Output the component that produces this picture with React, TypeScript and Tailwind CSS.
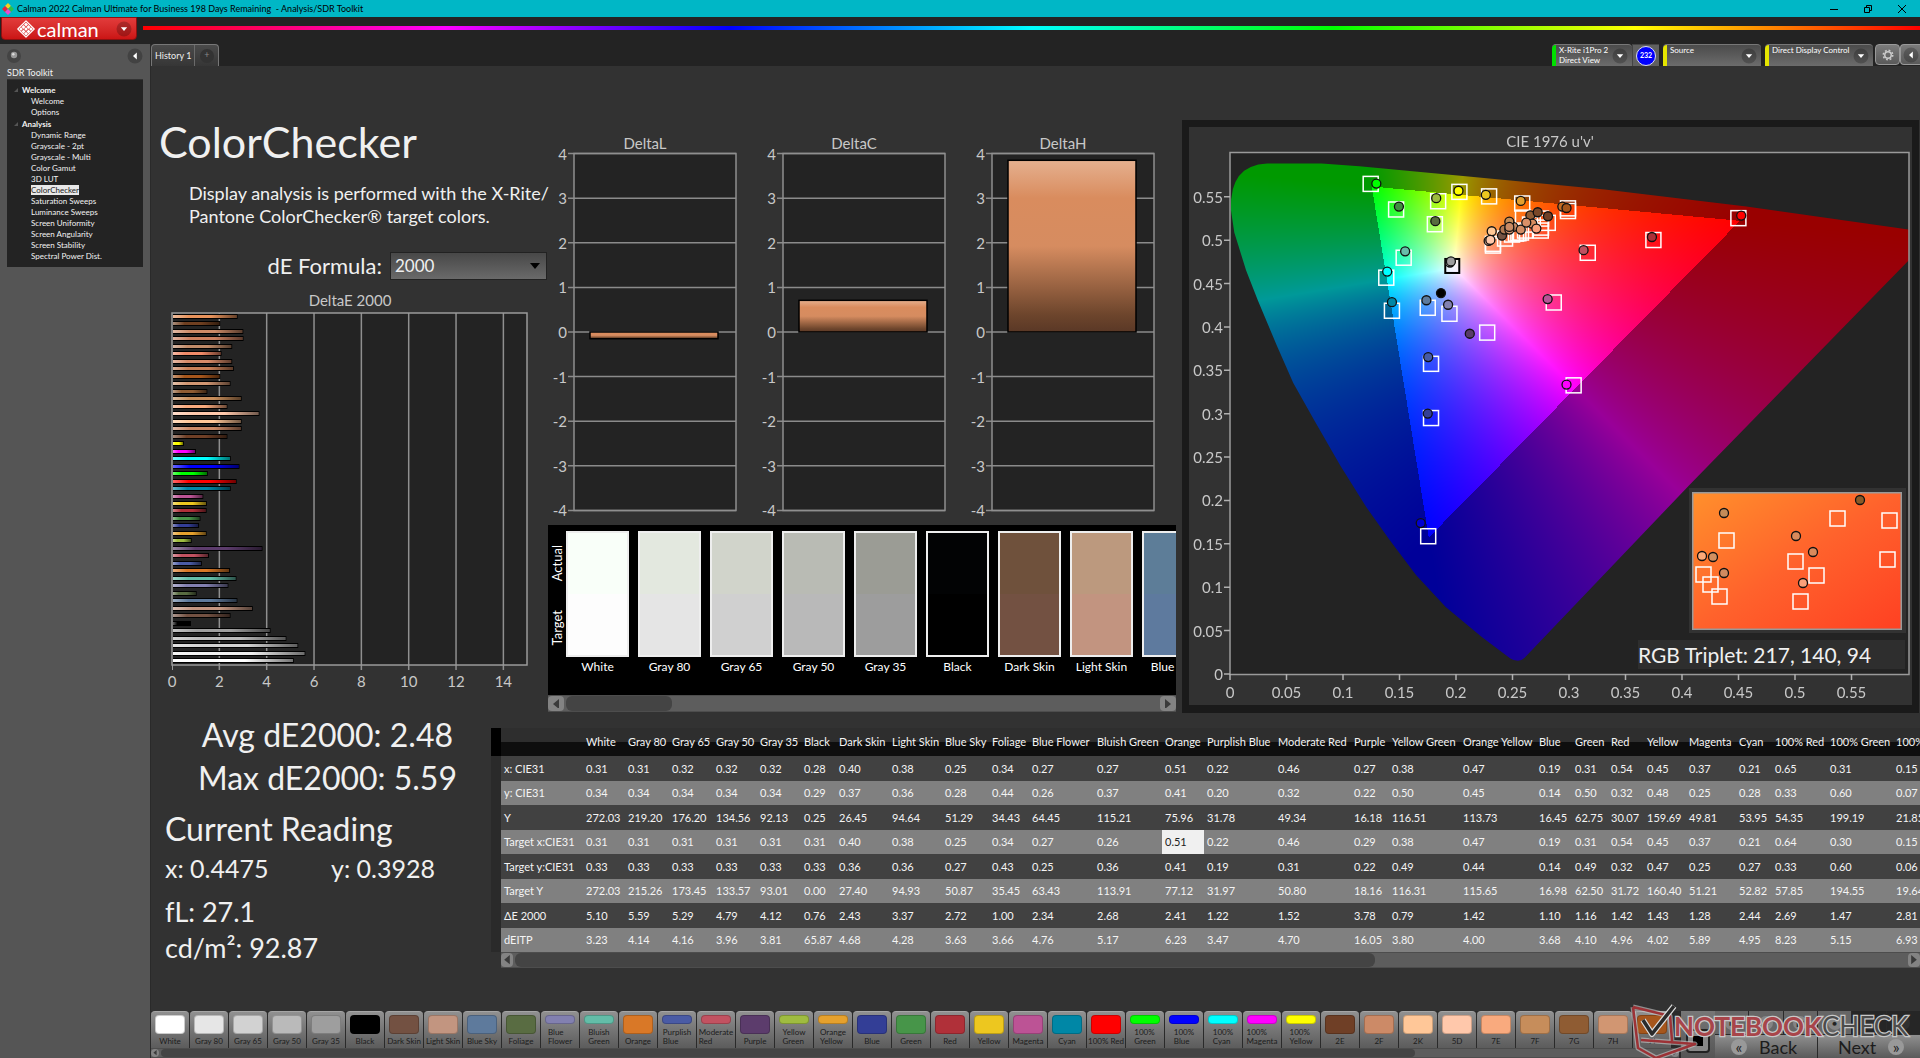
import React, { useEffect, useRef } from "react";

/* ---------- data ---------- */

type Patch = { name: string; color: string; label?: string[] };

const patches: Patch[] = [
  { name: "White", color: "#ffffff" },
  { name: "Gray 80", color: "#e6e6e6" },
  { name: "Gray 65", color: "#d2d2d2" },
  { name: "Gray 50", color: "#bababa" },
  { name: "Gray 35", color: "#9e9e9e" },
  { name: "Black", color: "#000000" },
  { name: "Dark Skin", color: "#735142" },
  { name: "Light Skin", color: "#c29580" },
  { name: "Blue Sky", color: "#5e7a9c" },
  { name: "Foliage", color: "#596c42" },
  { name: "Blue Flower", color: "#8280b0", label: ["Blue", "Flower"] },
  { name: "Bluish Green", color: "#63bda8", label: ["Bluish", "Green"] },
  { name: "Orange", color: "#d97827" },
  { name: "Purplish Blue", color: "#4a5ba5", label: ["Purplish", "Blue"] },
  { name: "Moderate Red", color: "#c25261", label: ["Moderate", "Red"] },
  { name: "Purple", color: "#5c3c6c" },
  { name: "Yellow Green", color: "#9fbc40", label: ["Yellow", "Green"] },
  { name: "Orange Yellow", color: "#e6a12d", label: ["Orange", "Yellow"] },
  { name: "Blue", color: "#333e96" },
  { name: "Green", color: "#479549" },
  { name: "Red", color: "#b03039" },
  { name: "Yellow", color: "#edc71f" },
  { name: "Magenta", color: "#bc5395" },
  { name: "Cyan", color: "#0087a6" },
  { name: "100% Red", color: "#ff0000" },
  { name: "100% Green", color: "#00ff00", label: ["100%", "Green"] },
  { name: "100% Blue", color: "#0000ff", label: ["100%", "Blue"] },
  { name: "100% Cyan", color: "#00ffff", label: ["100%", "Cyan"] },
  { name: "100% Magenta", color: "#ff00ff", label: ["100%", "Magenta"] },
  { name: "100% Yellow", color: "#ffff00", label: ["100%", "Yellow"] },
  { name: "2E", color: "#6f3f26" },
  { name: "2F", color: "#cc8a67" },
  { name: "2K", color: "#ffc798" },
  { name: "5D", color: "#ffc8ab" },
  { name: "7E", color: "#f9aa7e" },
  { name: "7F", color: "#c68d5b" },
  { name: "7G", color: "#8f5c33" },
  { name: "7H", color: "#d19672" },
  { name: "7I", color: "#a6561c" },
];

// DeltaE bars, top to bottom
const deltaE: [number, string][] = [
  [2.73, "#e8935c"], [2.0, "#6f3f20"], [2.97, "#cc8a67"], [2.98, "#cb8060"], [2.5, "#c08a68"],
  [2.05, "#f08a68"], [2.5, "#d68a68"], [2.57, "#c98058"], [2.0, "#a6561c"], [2.43, "#d19672"],
  [1.45, "#8f5c33"], [2.9, "#c68d5b"], [2.3, "#f9aa7e"], [3.65, "#ffc8ab"], [2.9, "#ffc798"],
  [2.9, "#cc8a67"], [2.3, "#6f3f26"], [0.46, "#ffff00"], [0.97, "#ff00ff"], [2.44, "#00ffff"],
  [2.81, "#0000ff"], [1.47, "#00ff00"], [2.69, "#ff0000"], [2.44, "#0087a6"], [1.28, "#bc5395"],
  [1.43, "#edc71f"], [1.42, "#b03039"], [1.16, "#479549"], [1.1, "#333e96"], [1.42, "#e6a12d"],
  [0.79, "#9fbc40"], [3.78, "#5c3c6c"], [1.52, "#c25261"], [1.22, "#4a5ba5"], [2.41, "#d97827"],
  [2.68, "#63bda8"], [2.34, "#8280b0"], [1.0, "#596c42"], [2.72, "#5e7a9c"], [3.37, "#c29580"],
  [2.43, "#735142"], [0.76, "#000000"], [4.12, "#9e9e9e"], [4.79, "#bababa"], [5.29, "#d2d2d2"],
  [5.59, "#f0f0f0"], [5.1, "#ffffff"],
];

const swatches = [
  { name: "White", actual: "#f9fff9", target: "#fdfdfd" },
  { name: "Gray 80", actual: "#e3e8df", target: "#e5e5e5" },
  { name: "Gray 65", actual: "#d1d4cb", target: "#d0d0d0" },
  { name: "Gray 50", actual: "#b9bbb4", target: "#b9b9b9" },
  { name: "Gray 35", actual: "#9b9c95", target: "#9d9d9d" },
  { name: "Black", actual: "#020304", target: "#000000" },
  { name: "Dark Skin", actual: "#6f513c", target: "#735142" },
  { name: "Light Skin", actual: "#bc997e", target: "#c29480" },
  { name: "Blue Sky", actual: "#5d7d98", target: "#5e7a9e" },
];

const columns: [string, number][] = [
  ["White", 42], ["Gray 80", 44], ["Gray 65", 44], ["Gray 50", 44], ["Gray 35", 44], ["Black", 35],
  ["Dark Skin", 53], ["Light Skin", 53], ["Blue Sky", 47], ["Foliage", 40], ["Blue Flower", 65],
  ["Bluish Green", 68], ["Orange", 42], ["Purplish Blue", 71], ["Moderate Red", 76], ["Purple", 38],
  ["Yellow Green", 71], ["Orange Yellow", 76], ["Blue", 36], ["Green", 36], ["Red", 36],
  ["Yellow", 42], ["Magenta", 50], ["Cyan", 36], ["100% Red", 55], ["100% Green", 66], ["100% Blue", 62],
];

const rows: [string, string][] = [
  ["x: CIE31", "0.31 0.31 0.32 0.32 0.32 0.28 0.40 0.38 0.25 0.34 0.27 0.27 0.51 0.22 0.46 0.27 0.38 0.47 0.19 0.31 0.54 0.45 0.37 0.21 0.65 0.31 0.15"],
  ["y: CIE31", "0.34 0.34 0.34 0.34 0.34 0.29 0.37 0.36 0.28 0.44 0.26 0.37 0.41 0.20 0.32 0.22 0.50 0.45 0.14 0.50 0.32 0.48 0.25 0.28 0.33 0.60 0.07"],
  ["Y", "272.03 219.20 176.20 134.56 92.13 0.25 26.45 94.64 51.29 34.43 64.45 115.21 75.96 31.78 49.34 16.18 116.51 113.73 16.45 62.75 30.07 159.69 49.81 53.95 54.35 199.19 21.85"],
  ["Target x:CIE31", "0.31 0.31 0.31 0.31 0.31 0.31 0.40 0.38 0.25 0.34 0.27 0.26 0.51 0.22 0.46 0.29 0.38 0.47 0.19 0.31 0.54 0.45 0.37 0.21 0.64 0.30 0.15"],
  ["Target y:CIE31", "0.33 0.33 0.33 0.33 0.33 0.33 0.36 0.36 0.27 0.43 0.25 0.36 0.41 0.19 0.31 0.22 0.49 0.44 0.14 0.49 0.32 0.47 0.25 0.27 0.33 0.60 0.06"],
  ["Target Y", "272.03 215.26 173.45 133.57 93.01 0.00 27.40 94.93 50.87 35.45 63.43 113.91 77.12 31.97 50.80 18.16 116.31 115.65 16.98 62.50 31.72 160.40 51.21 52.82 57.85 194.55 19.64"],
  ["ΔE 2000", "5.10 5.59 5.29 4.79 4.12 0.76 2.43 3.37 2.72 1.00 2.34 2.68 2.41 1.22 1.52 3.78 0.79 1.42 1.10 1.16 1.42 1.43 1.28 2.44 2.69 1.47 2.81"],
  ["dEITP", "3.23 4.14 4.16 3.96 3.81 65.87 4.68 4.28 3.63 3.66 4.76 5.17 6.23 3.47 4.70 16.05 3.80 4.00 3.68 4.10 4.96 4.02 5.89 4.95 8.23 5.15 6.93"],
];

const tree = [
  { title: "Welcome", items: ["Welcome", "Options"] },
  {
    title: "Analysis",
    items: [
      "Dynamic Range", "Grayscale - 2pt", "Grayscale - Multi", "Color Gamut", "3D LUT", "ColorChecker",
      "Saturation Sweeps", "Luminance Sweeps", "Screen Uniformity", "Screen Angularity",
      "Screen Stability", "Spectral Power Dist.",
    ],
  },
];

// CIE 1976 diagram, all in u'v'
const locus: [number, number][] = [
  [0.0008, 0.535], [0.001, 0.547], [0.0025, 0.5588], [0.0048, 0.567], [0.0079, 0.574], [0.0125, 0.58],
  [0.0184, 0.5845], [0.025, 0.5872], [0.033, 0.5883], [0.081, 0.5883], [0.1145, 0.5852], [0.2063, 0.574],
  [0.3317, 0.5583], [0.457, 0.5388], [0.624, 0.508], [0.4068, 0.2182], [0.2607, 0.0187], [0.258, 0.016],
  [0.2548, 0.0152], [0.251, 0.016], [0.2481, 0.0178], [0.2231, 0.0425], [0.1909, 0.0772],
  [0.1646, 0.1141], [0.1408, 0.1553], [0.1207, 0.1922], [0.0977, 0.2399], [0.0748, 0.292],
  [0.056, 0.3354], [0.0414, 0.3787], [0.0246, 0.4308], [0.0142, 0.4655], [0.0038, 0.5089],
];

const targets: [number, number][] = [
  [0.1245, 0.5649], [0.147, 0.5354], [0.1842, 0.5449], [0.203, 0.5557], [0.2293, 0.5505], [0.2586, 0.5423],
  [0.2991, 0.5367], [0.2991, 0.5336], [0.4499, 0.5254], [0.3747, 0.5002], [0.3166, 0.4855],
  [0.1813, 0.5184], [0.1537, 0.4798], [0.1383, 0.4568], [0.1433, 0.4187], [0.175, 0.4221],
  [0.1942, 0.4152], [0.2276, 0.3935], [0.2865, 0.4282], [0.1779, 0.3575], [0.3041, 0.3327],
  [0.1779, 0.295], [0.1754, 0.1588], [0.2327, 0.4938], [0.2327, 0.4958], [0.2434, 0.5019],
  [0.2496, 0.5065], [0.2531, 0.5076], [0.2575, 0.5088], [0.2611, 0.5111], [0.2552, 0.508],
  [0.275, 0.5111], [0.2752, 0.5145], [0.2812, 0.52], [0.2655, 0.518], [0.2752, 0.5249], [0.2593, 0.526],
];

const readings: [number, number, string][] = [
  [0.1295, 0.5653, "#00ff00"], [0.1495, 0.5388, "#3f8f40"], [0.1825, 0.5484, "#9dbb40"],
  [0.2022, 0.557, "#ffff00"], [0.2264, 0.5523, "#ecc820"], [0.2573, 0.5453, "#e4a02f"],
  [0.2941, 0.5388, "#c46c24"], [0.2978, 0.5371, "#a6561c"], [0.4524, 0.5284, "#ff0000"],
  [0.3734, 0.5037, "#ae3038"], [0.3129, 0.4885, "#c05060"], [0.1817, 0.5219, "#586c3f"],
  [0.155, 0.4872, "#67bdaa"], [0.1391, 0.4638, "#00ffff"], [0.1433, 0.4286, "#0087a5"],
  [0.1947, 0.4743, "#c8c8c8"], [0.1955, 0.4755, "#9e9e9e"], [0.1867, 0.439, "#000000"],
  [0.1738, 0.4308, "#5d7b9e"], [0.193, 0.4256, "#8281b0"], [0.2122, 0.3922, "#593b69"],
  [0.2811, 0.4321, "#b95397"], [0.1754, 0.3653, "#465ba5"], [0.2978, 0.3336, "#ff00ff"],
  [0.175, 0.3002, "#343f95"], [0.1688, 0.174, "#0000d0"], [0.2316, 0.5103, "#ffc896"],
  [0.2289, 0.4992, "#c79680"], [0.2304, 0.5003, "#ffc8aa"], [0.2407, 0.5053, "#735242"],
  [0.2428, 0.5122, "#b07850"], [0.2507, 0.5153, "#c98a64"], [0.2472, 0.5214, "#c48c58"],
  [0.2472, 0.5122, "#d2946f"], [0.2472, 0.5153, "#c98a64"], [0.2573, 0.5122, "#d28c64"],
  [0.2658, 0.5287, "#905c34"], [0.2675, 0.5191, "#d98c5e"], [0.2622, 0.5203, "#d99068"],
  [0.2711, 0.5134, "#faa07a"], [0.2723, 0.5322, "#7a4828"], [0.2814, 0.5276, "#703f26"],
];

const insetTargets: [number, number][] = [
  [146, 26], [198, 28], [35, 48], [104, 69], [196, 67], [125, 83], [12, 82], [19, 92], [28, 104], [109, 109],
];
const insetReadings: [number, number, string][] = [
  [168, 8, "#8a5a28"], [32, 21, "#c48c58"], [104, 44, "#d98a5c"], [121, 60, "#d98a5c"], [10, 64, "#ffaa78"],
  [21, 65, "#d29060"], [32, 81, "#d08a60"], [111, 91, "#faa07a"],
];

/* ---------- small parts ---------- */

function RoundArrow({ dir = "down" }: { dir?: "down" | "left" }) {
  return (
    <svg className="h-4 w-4 shrink-0" viewBox="0 0 16 16" aria-hidden="true">
      <circle cx="8" cy="8" r="7.5" fill="#000" opacity="0.22" />
      <path d={dir === "down" ? "M4.8 6.2h6.4L8 10z" : "M9.8 4.4v7.2L6 8z"} fill="#fff" />
    </svg>
  );
}

function Scrollbar({ thumb, height, arrow }: { thumb: string; height: string; arrow: string }) {
  return (
    <div className={`flex items-stretch border-y border-[#4d4d4d] bg-[#5d5d5d] ${height}`}>
      <button aria-label="Scroll left" className={`flex shrink-0 items-center justify-center rounded-sm bg-[#838383] ${arrow}`}>
        <svg className="h-2/3 w-1/2" viewBox="0 0 6 10"><path d="M6 0v10L0 5z" fill="#3a3a3a" /></svg>
      </button>
      <div className="flex-1 px-0.5">
        <div className={`h-full rounded-md bg-[#444] ${thumb}`} />
      </div>
      <button aria-label="Scroll right" className={`flex shrink-0 items-center justify-center rounded-sm bg-[#838383] ${arrow}`}>
        <svg className="h-2/3 w-1/2" viewBox="0 0 6 10"><path d="M0 0v10l6-5z" fill="#3a3a3a" /></svg>
      </button>
    </div>
  );
}

/* ---------- header ---------- */

function TitleBar() {
  return (
    <div className="flex h-[17px] items-center bg-[#00b7c6] px-0.5 text-[9px] leading-4 text-black">
      <svg className="mr-[3px] h-3 w-3" viewBox="0 0 12 12" aria-hidden="true">
        <path d="M6 0l3 3-3 3-3-3z" fill="#f4d21f" />
        <path d="M3 3l3 3-3 3-3-3z" fill="#e5263a" />
        <path d="M9 3l3 3-3 3-3-3z" fill="#2fc04a" />
        <path d="M6 6l3 3-3 3-3-3z" fill="#e64bd0" />
      </svg>
      <span className="whitespace-pre">Calman 2022 Calman Ultimate for Business 198 Days Remaining  - Analysis/SDR Toolkit</span>
      <div className="ml-auto flex items-center gap-[26px] pr-3">
        <button aria-label="Minimize"><svg className="h-2 w-2" viewBox="0 0 8 8"><path d="M0 4.5h8" stroke="#000" /></svg></button>
        <button aria-label="Restore">
          <svg className="h-2 w-2" viewBox="0 0 8 8" fill="none" stroke="#000"><path d="M.5 2.5h5v5h-5zM2.5 2.5v-2h5v5h-2" /></svg>
        </button>
        <button aria-label="Close"><svg className="h-2 w-2" viewBox="0 0 8 8"><path d="M0 0l8 8M8 0L0 8" stroke="#000" /></svg></button>
      </div>
    </div>
  );
}

function BrandBar() {
  return (
    <div className="flex h-[27px] items-start gap-1.5 bg-[#232323]">
      <button className="ml-px flex h-[23px] w-[136px] items-center rounded-b-sm border border-[#8e1010] bg-gradient-to-b from-[#e23b3b] to-[#cb1414] pl-[15px] text-white">
        <svg className="h-[18px] w-[18px]" viewBox="0 0 18 18" aria-hidden="true">
          <path d="M9 0.8l8.2 8.2L9 17.2 0.8 9z" fill="none" stroke="#fff" strokeWidth="1.2" strokeLinejoin="round" />
          <g fill="#fff">
            <path d="M9 2.6l2 2-2 2-2-2zM6.5 5l2 2-2 2-2-2zM11.5 5l2 2-2 2-2-2zM4 7.2l1.9 1.9L4 11 2.2 9.1zM9 7.2l1.9 1.9L9 11 7.1 9.1zM14 7.2l1.9 1.9L14 11l-1.9-1.9zM6.5 9.5l2 2-2 2-2-2zM11.5 9.5l2 2-2 2-2-2zM9 11.8l2 2-2 2-2-2z" />
          </g>
        </svg>
        <span className="ml-0.5 text-xl font-normal leading-5">calman</span>
        <span className="ml-auto mr-1"><RoundArrow /></span>
      </button>
      <div className="mt-[9px] h-1 flex-1 bg-[linear-gradient(90deg,#f00_0%,#f0f_17%,#00f_33%,#0ff_50%,#0f0_67%,#ff0_84%,#f00_100%)]" />
    </div>
  );
}

function DeviceButton({ color, lines, className }: { color: string; lines: string[]; className: string }) {
  return (
    <button className={`flex h-[22px] rounded-t-sm border-t border-[#777] bg-gradient-to-b from-[#4b4b4b] to-[#6c6c6c] text-left text-[8px] leading-[10px] text-white ${className}`}>
      <span className={`h-full w-1 shrink-0 rounded-tl-sm ${color}`} />
      <span className="ml-[3px] flex-1 whitespace-nowrap">
        {lines.map((line) => (
          <span key={line} className="block">{line}</span>
        ))}
      </span>
      <span className="mr-1 mt-[3px]"><RoundArrow /></span>
    </button>
  );
}

function TabRow() {
  return (
    <div className="flex h-[22px] items-end bg-[#232323]">
      <div className="flex h-[22px] rounded-t-sm border border-b-0 border-[#777] bg-gradient-to-b from-[#4a4a4a] to-[#363636]">
        <button className="border-r border-[#6a6a6a] px-[3px] text-[9px] text-[#eee]">History 1</button>
        <button aria-label="Add tab" className="flex w-[23px] items-center justify-center">
          <span className="h-3.5 w-3.5 rounded-full bg-[#333] text-[9px] leading-3 text-[#888]">+</span>
        </button>
      </div>
      <div className="ml-auto flex items-start gap-1">
        <div className="flex">
          <DeviceButton className="w-20" color="bg-[#00e000]" lines={["X-Rite i1Pro 2", "Direct View"]} />
          <div className="flex h-[22px] w-[27px] items-center justify-center border-l border-t border-[#444] bg-[#606060]">
            <span className="flex h-5 w-5 items-center justify-center rounded-full border border-[#dde] bg-[#0000ff] text-[7px] font-bold text-white">232</span>
          </div>
        </div>
        <DeviceButton className="w-[98px]" color="bg-[#e6e600]" lines={["Source"]} />
        <DeviceButton className="w-[108px]" color="bg-[#e6e600]" lines={["Direct Display Control"]} />
        <div className="-ml-0.5 flex">
          <button aria-label="Settings" className="flex h-[21px] w-[25px] items-center justify-center rounded-sm border border-[#999] bg-gradient-to-b from-[#7b7b7b] to-[#5a5a5a]">
            <svg className="h-3 w-3" viewBox="0 0 24 24" fill="none" stroke="#ccc">
              <circle cx="12" cy="12" r="6.5" strokeWidth="3" />
              <circle cx="12" cy="12" r="9.5" strokeWidth="3" strokeDasharray="3.7 3.76" />
            </svg>
          </button>
          <button aria-label="Collapse" className="flex h-[21px] w-5 items-center justify-center rounded-l-sm border border-r-0 border-[#999] bg-gradient-to-b from-[#7b7b7b] to-[#5a5a5a]">
            <RoundArrow dir="left" />
          </button>
        </div>
      </div>
    </div>
  );
}

/* ---------- sidebar ---------- */

function Sidebar() {
  return (
    <aside className="w-[151px] shrink-0 border-r border-[#2a2a2a] bg-[#555] px-[7px] text-[#f2f2f2]">
      <div className="flex h-[27px] items-center justify-between pb-1">
        <svg className="h-3.5 w-3.5" viewBox="0 0 14 14" aria-hidden="true">
          <circle cx="7" cy="7" r="7" fill="#444" />
          <circle cx="7" cy="6" r="3.2" fill="#999" />
          <circle cx="6.3" cy="5.2" r="1.2" fill="#ddd" />
        </svg>
        <button aria-label="Hide panel"><RoundArrow dir="left" /></button>
      </div>
      <h2 className="h-2 text-[9px] leading-[3px]">SDR Toolkit</h2>
      <nav className="h-[188px] border-t border-[#333] bg-[#232323] pt-1 text-[8px] leading-[11px]">
        {tree.map((group) => (
          <div key={group.title}>
            <div className="flex h-3 items-center font-bold">
              <svg className="ml-[7px] mr-1 h-1 w-1" viewBox="0 0 4 4"><path d="M4 0v4H0z" fill="#555" /></svg>
              {group.title}
            </div>
            <ul className="pl-6">
              {group.items.map((item) => (
                <li key={item} className="h-[11px]">
                  <a href="#" className={item === "ColorChecker" ? "bg-[#e8e8e8] text-[#222]" : ""}>{item}</a>
                </li>
              ))}
            </ul>
          </div>
        ))}
      </nav>
    </aside>
  );
}

/* ---------- charts ---------- */

function DeltaEChart() {
  const x = (v: number) => 21 + v * 23.67;
  return (
    <svg className="block h-[404px] w-[398px]" viewBox="0 0 398 404" role="img" aria-label="DeltaE 2000">
      <defs>
        <linearGradient id="barShade">
          <stop offset="0" stopColor="#fff" stopOpacity="0.4" />
          <stop offset="0.25" stopColor="#fff" stopOpacity="0" />
          <stop offset="0.6" stopColor="#000" stopOpacity="0" />
          <stop offset="1" stopColor="#000" stopOpacity="0.55" />
        </linearGradient>
      </defs>
      <text x="199" y="22" textAnchor="middle" fontSize="15" fill="#c8c8c8">DeltaE 2000</text>
      <rect x="21" y="29" width="355" height="352" fill="#232323" />
      {[2, 4, 6, 8, 10, 12, 14].map((v) => (
        <path key={v} d={`M${x(v)} 29v357`} stroke="#8f8f8f" strokeWidth="1.5" />
      ))}
      <rect x="21" y="29" width="355" height="352" fill="none" stroke="#9a9a9a" strokeWidth="1.5" />
      {deltaE.map(([v, color], i) => {
        const y = Math.round(30 + i * 7.48);
        return (
          <g key={i}>
            <rect x="22" y={y} width={v * 23.67} height="5" fill="#000" />
            <rect x="22" y={y + 1} width={v * 23.67 - 1} height="3" fill={color} />
            <rect x="22" y={y + 1} width={v * 23.67 - 1} height="3" fill="url(#barShade)" />
          </g>
        );
      })}
      {[0, 2, 4, 6, 8, 10, 12, 14].map((v) => (
        <text key={v} x={x(v)} y="403" textAnchor="middle" fontSize="15" fill="#c8c8c8">{v}</text>
      ))}
      <path d="M21.5 381v5" stroke="#9a9a9a" />
    </svg>
  );
}

function DeltaChart({ title, value }: { title: string; value: number }) {
  const y = (v: number) => 199 - v * 44.6;
  const ticks = [4, 3, 2, 1, 0, -1, -2, -3, -4];
  const top = value > 0 ? y(value) : y(0);
  const height = Math.abs(value) * 44.6;
  return (
    <svg className="block h-[390px] w-[209px]" viewBox="0 0 209 390" role="img" aria-label={title}>
      <defs>
        <linearGradient id="skinBar" x2="0" y2="1">
          <stop offset="0" stopColor="#e5b08f" />
          <stop offset="0.22" stopColor="#d98c5e" />
          <stop offset="0.5" stopColor="#d68c60" />
          <stop offset="0.9" stopColor="#6d452c" />
          <stop offset="1" stopColor="#5a3826" />
        </linearGradient>
      </defs>
      <text x="97" y="16" textAnchor="middle" fontSize="15" fill="#c8c8c8">{title}</text>
      <rect x="26" y="20.5" width="162" height="357" fill="#232323" />
      {ticks.map((t) => (
        <g key={t}>
          <path d={`M20 ${y(t)}H188`} stroke="#8b8b8b" strokeWidth="1.5" />
          <text x="19" y={y(t) + 6} textAnchor="end" fontSize="15" fill="#c8c8c8">{t}</text>
        </g>
      ))}
      <rect x="26" y="20.5" width="162" height="357" fill="none" stroke="#8f8f8f" strokeWidth="1.5" />
      <rect x="42" y={top} width="128" height={height} fill="url(#skinBar)" stroke="#000" strokeWidth="1.5" />
    </svg>
  );
}

const CIE_W = 723;
const CIE_H = 578;
const cx = (u: number) => 41 + u * 1130;
const cy = (v: number) => 547 - v * 867.6;

function GamutCanvas() {
  const ref = useRef<HTMLCanvasElement>(null);

  useEffect(() => {
    const ctx = ref.current?.getContext("2d");
    if (!ctx) return;
    const image = ctx.createImageData(CIE_W, CIE_H);
    for (let py = 0; py < CIE_H; py++) {
      for (let px = 0; px < CIE_W; px++) {
        const u = (px - 41) / 1130;
        const v = Math.max((547 - py) / 867.6, 0.001);
        const d = 6 * u - 16 * v + 12;
        const x = (9 * u) / d;
        const y = (4 * v) / d;
        const X = x / y;
        const Z = (1 - x - y) / y;
        const lin = [
          3.2406 * X - 1.5372 - 0.4986 * Z,
          -0.9689 * X + 1.8758 + 0.0415 * Z,
          0.0557 * X - 0.204 + 1.057 * Z,
        ];
        const max = Math.max(...lin);
        // colours outside the sRGB triangle are dimmed
        const gain = Math.min(...lin) < 0 ? 0.6 : 1;
        const o = (py * CIE_W + px) * 4;
        for (let c = 0; c < 3; c++) {
          image.data[o + c] = 255 * gain * Math.max(lin[c] / max, 0);
        }
        image.data[o + 3] = 255;
      }
    }
    ctx.putImageData(image, 0, 0);
    ctx.globalCompositeOperation = "destination-in";
    ctx.beginPath();
    locus.forEach(([u, v]) => ctx.lineTo(cx(u), cy(v)));
    ctx.closePath();
    ctx.fill();
    ctx.globalCompositeOperation = "source-over";
    ctx.clearRect(720, 0, 3, CIE_H);
  }, []);

  return <canvas ref={ref} width={CIE_W} height={CIE_H} className="absolute inset-0 h-full w-full" />;
}

function CieChart() {
  const uTicks = [0, 0.05, 0.1, 0.15, 0.2, 0.25, 0.3, 0.35, 0.4, 0.45, 0.5, 0.55];
  return (
    <section className="min-w-0 flex-1 border-[7px] border-b-8 border-[#1a1a1a] bg-[#323232]">
      <div className="relative">
        <svg className="block w-full" viewBox="0 0 723 578" aria-hidden="true">
          <rect x="41" y="25" width="679" height="522" fill="#232323" />
        </svg>
        <GamutCanvas />
        <svg className="absolute inset-0 w-full" viewBox="0 0 723 578" role="img" aria-label="CIE 1976 u'v' diagram">
          <defs>
            <linearGradient id="insetFill" x2="1" y2="1">
              <stop offset="0" stopColor="#ff902c" />
              <stop offset="0.5" stopColor="#ff622c" />
              <stop offset="1" stopColor="#ff4022" />
            </linearGradient>
          </defs>
          <text x="361" y="20" textAnchor="middle" fontSize="15" fill="#c8c8c8">CIE 1976 u'v'</text>
          <rect x="41" y="25.5" width="679" height="522" fill="none" stroke="#9a9a9a" strokeWidth="1.5" />
          {uTicks.map((t) => (
            <g key={t} fill="#c8c8c8" fontSize="15">
              <path d={`M${cx(t)} 547v6M35 ${cy(t)}h6`} stroke="#b0b0b0" strokeWidth="1.5" />
              <text x={cx(t)} y="571" textAnchor="middle">{t}</text>
              <text x="34" y={cy(t) + 6} textAnchor="end">{t}</text>
            </g>
          ))}
          <g fill="none" stroke="#fff" strokeWidth="1.5">
            {targets.map(([u, v], i) => (
              <rect key={i} x={cx(u) - 7.5} y={cy(v) - 7.5} width="15" height="15" />
            ))}
          </g>
          <rect x={cx(0.1967) - 7} y={cy(0.4703) - 7} width="14" height="14" fill="#f4f0ff" fillOpacity="0.6" stroke="#000" strokeWidth="2" />
          {readings.map(([u, v, color], i) => (
            <circle key={i} cx={cx(u)} cy={cy(v)} r="4.5" fill={color} stroke="#111" strokeWidth="1.3" />
          ))}
          <rect x="500" y="361" width="217" height="145" fill="#323232" />
          <svg x="503" y="365" width="210" height="138" viewBox="0 0 210 138">
            <rect width="210" height="138" fill="url(#insetFill)" stroke="#999" strokeWidth="3" />
            {insetTargets.map(([x, y], i) => (
              <rect key={i} x={x - 8} y={y - 7} width="15" height="15" fill="none" stroke="#fff" strokeWidth="1.5" />
            ))}
            {insetReadings.map(([x, y, color], i) => (
              <circle key={i} cx={x} cy={y} r="4.5" fill={color} stroke="#111" strokeWidth="1.3" />
            ))}
          </svg>
          <rect x="449" y="513" width="267" height="29" fill="#2e2e2e" />
          <text x="449" y="536" fontSize="21" fill="#f0f0f0">RGB Triplet: 217, 140, 94</text>
        </svg>
      </div>
    </section>
  );
}

/* ---------- panels ---------- */

function Intro() {
  return (
    <section className="w-[397px] shrink-0 text-[#f0f0f0]">
      <h1 className="ml-2 mt-[50px] text-[43px] leading-[52px]">ColorChecker</h1>
      <p className="ml-[38px] mt-[14px] whitespace-nowrap text-lg leading-[23px]">
        Display analysis is performed with the X-Rite/
        <br />
        Pantone ColorChecker® target colors.
      </p>
      <div className="mb-1 mt-6 flex items-center justify-end gap-2">
        <label htmlFor="formula" className="text-[22px] leading-7">dE Formula:</label>
        <div className="relative mr-px">
          <select
            id="formula"
            defaultValue="2000"
            className="h-7 w-[157px] appearance-none border border-[#222] bg-gradient-to-b from-[#484848] to-[#6a6a6a] pl-1 text-[17px] leading-6 text-[#f0f0f0]"
          >
            <option>2000</option>
            <option>1994</option>
          </select>
          <svg className="pointer-events-none absolute right-1.5 top-2.5 h-2 w-3" viewBox="0 0 12 8"><path d="M1 1h10L6 7z" fill="#000" /></svg>
        </div>
      </div>
      <DeltaEChart />
    </section>
  );
}

function SwatchPanel() {
  return (
    <section className="bg-black text-white">
      <div className="flex h-[170px] overflow-hidden pt-[6px]">
        <div className="flex h-[128px] w-[18px] shrink-0 flex-col items-center justify-around text-[13px] leading-4">
          <span className="rotate-180 [writing-mode:vertical-rl]">Actual</span>
          <span className="rotate-180 [writing-mode:vertical-rl]">Target</span>
        </div>
        <div className="flex gap-[9px]">
          {swatches.map((s) => (
            <figure key={s.name} className="w-[63px] shrink-0">
              <div className="flex h-[126px] flex-col border-2 border-[#eee]">
                <div className="flex-1" style={{ background: s.actual }} />
                <div className="flex-1" style={{ background: s.target }} />
              </div>
              <figcaption className="whitespace-nowrap text-center text-xs leading-5">{s.name}</figcaption>
            </figure>
          ))}
        </div>
      </div>
      <Scrollbar height="h-[17px]" arrow="w-4" thumb="w-[106px]" />
    </section>
  );
}

function Stats() {
  return (
    <section className="w-[340px] shrink-0 pl-[14px] text-[#f0f0f0]">
      <div className="pr-[34px] text-right text-[32px] leading-[43px]">
        <p className="pr-1">Avg dE2000: 2.48</p>
        <p>Max dE2000: 5.59</p>
      </div>
      <h2 className="mt-2 text-[32px] leading-[43px]">Current Reading</h2>
      <div className="flex text-[25px] leading-9">
        <p className="w-[166px]">x: 0.4475</p>
        <p>y: 0.3928</p>
      </div>
      <p className="mt-2 text-[27px] leading-9">fL: 27.1</p>
      <p className="text-[27px] leading-9">cd/m²: 92.87</p>
    </section>
  );
}

function ReadingsTable() {
  return (
    <section className="min-w-0 flex-1 overflow-hidden pt-[15px]">
      <table className="w-[1464px] table-fixed border-collapse text-left text-[11px] leading-4 text-[#f4f4f4]">
        <colgroup>
          <col className="w-[10px]" />
          <col className="w-[82px]" />
          {columns.map(([name, width]) => (
            <col key={name} style={{ width }} />
          ))}
        </colgroup>
        <thead>
          <tr className="h-7 bg-[linear-gradient(#2e2e2e_50%,#0e0e0e_50%)]">
            <td className="bg-black" />
            <td />
            {columns.map(([name]) => (
              <th key={name} scope="col" className="whitespace-nowrap pl-[3px] font-normal">{name}</th>
            ))}
          </tr>
        </thead>
        <tbody>
          {rows.map(([name, values], r) => (
            <tr key={name} className={r % 2 ? "h-6 bg-[#808080]" : "h-[25px] bg-[#414141]"}>
              <td className="bg-[#2a2a2a]" />
              <th scope="row" className="whitespace-nowrap pl-[3px] font-normal">{name}</th>
              {values.split(" ").map((value, c) => (
                <td key={c} className={r === 3 && c === 12 ? "bg-[#f0f0f0] pl-[3px] text-[#222]" : "pl-[3px]"}>
                  {value}
                </td>
              ))}
            </tr>
          ))}
        </tbody>
      </table>
      <div className="ml-[10px]">
        <Scrollbar height="h-4" arrow="w-3" thumb="w-[860px]" />
      </div>
    </section>
  );
}

/* ---------- footer ---------- */

function Watermark() {
  return (
    <svg className="pointer-events-none absolute -top-2 right-0 h-[60px] w-[292px]" viewBox="0 0 292 60" aria-hidden="true">
      <g fill="none" strokeLinejoin="round">
        <path d="M5 4l37 9 2 25M5 4l5 41 18 10 39-14-54-4" stroke="#ccc" strokeWidth="5" opacity="0.6" />
        <path d="M5 4l37 9 2 25M5 4l5 41 18 10 39-14-54-4" stroke="#9c3236" strokeWidth="2.5" />
        <path d="M15 17l9 14L46 3" stroke="#ddd" strokeWidth="6" />
        <path d="M15 17l9 14L46 3" stroke="#2b2b2b" strokeWidth="3.5" />
      </g>
      <text x="46" y="33" fontSize="26" fontWeight="700" stroke="#c8c8c8" strokeWidth="2.5" paintOrder="stroke" fill="#a8454a">
        NOTEBOOK<tspan fill="#4c4c4c" fontWeight="400">CHECK</tspan>
      </text>
    </svg>
  );
}

function PatchBar() {
  return (
    <footer className="relative mt-auto flex h-[47px] bg-[#2a2a2a]">
      <div className="flex min-w-0 flex-1 flex-col">
        <div className="flex h-[37px] overflow-hidden">
          {patches.map((p) => (
            <button
              key={p.name}
              className="mr-px flex w-[38px] shrink-0 flex-col items-center justify-between rounded-t-sm border-t border-[#a5a5a5] bg-gradient-to-b from-[#909090] to-[#5c5c5c] pb-0.5 pt-[3px] text-[8px] leading-[9px] text-[#1c1c1c]"
            >
              <span className={`w-[30px] rounded-sm border border-black/20 ${p.label ? "h-[9px]" : "h-[19px]"}`} style={{ background: p.color }} />
              <span className="whitespace-nowrap text-left">
                {(p.label ?? [p.name]).map((line) => (
                  <span key={line} className="block">{line}</span>
                ))}
              </span>
            </button>
          ))}
        </div>
        <Scrollbar height="h-[10px]" arrow="w-2" thumb="w-[1254px]" />
      </div>
      <div className="ml-0.5 flex w-[34px] items-center justify-center bg-gradient-to-b from-[#777] to-[#555]">
        <button aria-label="Stop" className="mt-3 flex h-6 w-6 items-center justify-center rounded-sm border-2 border-[#222] bg-[#888]">
          <span className="h-2.5 w-2.5 bg-black" />
        </button>
      </div>
      <div className="grid w-[205px] grid-cols-2 grid-rows-2 gap-px">
        <div className="col-span-2 grid grid-cols-6 gap-px">
          {["■", "▶", "▮▮", "●", "", ""].map((glyph, i) => (
            <button key={i} aria-label={`Transport ${i + 1}`} className={`flex items-center justify-center text-[8px] ${i < 4 ? "bg-[#666] text-[#222]" : "bg-[#262626]"}`}>
              <span className={`flex h-3.5 w-3.5 items-center justify-center rounded-full ${i < 4 ? "bg-[#858585]" : "bg-[#303030]"}`}>{glyph}</span>
            </button>
          ))}
        </div>
        <button className="flex items-center gap-3 bg-gradient-to-b from-[#909090] to-[#5a5a5a] pl-4 text-lg leading-5 text-[#1c1c1c]">
          <span className="flex h-4 w-4 items-center justify-center rounded-full bg-[#999] text-base leading-3">«</span>
          Back
        </button>
        <button className="flex items-center gap-3 bg-gradient-to-b from-[#909090] to-[#5a5a5a] pl-5 text-lg leading-5 text-[#1c1c1c]">
          Next
          <span className="flex h-4 w-4 items-center justify-center rounded-full bg-[#999] text-base leading-3">»</span>
        </button>
      </div>
      <Watermark />
    </footer>
  );
}

export default function App() {
  return (
    <div className="flex min-h-screen flex-col overflow-hidden bg-[#323232] font-['Lato','Noto_Sans',sans-serif]">
      <TitleBar />
      <BrandBar />
      <div className="flex flex-1">
        <Sidebar />
        <main className="flex min-w-0 flex-1 flex-col">
          <TabRow />
          <div className="flex">
            <Intro />
            <div className="flex w-[628px] shrink-0 flex-col">
              <div className="mt-[67px] flex">
                <DeltaChart title="DeltaL" value={-0.15} />
                <DeltaChart title="DeltaC" value={0.71} />
                <DeltaChart title="DeltaH" value={3.85} />
              </div>
              <div className="mt-0.5">
                <SwatchPanel />
              </div>
            </div>
            <div className="ml-1.5 mt-[54px] flex min-w-0 flex-1 pr-px">
              <CieChart />
            </div>
          </div>
          <div className="flex">
            <Stats />
            <ReadingsTable />
          </div>
          <PatchBar />
        </main>
      </div>
    </div>
  );
}
